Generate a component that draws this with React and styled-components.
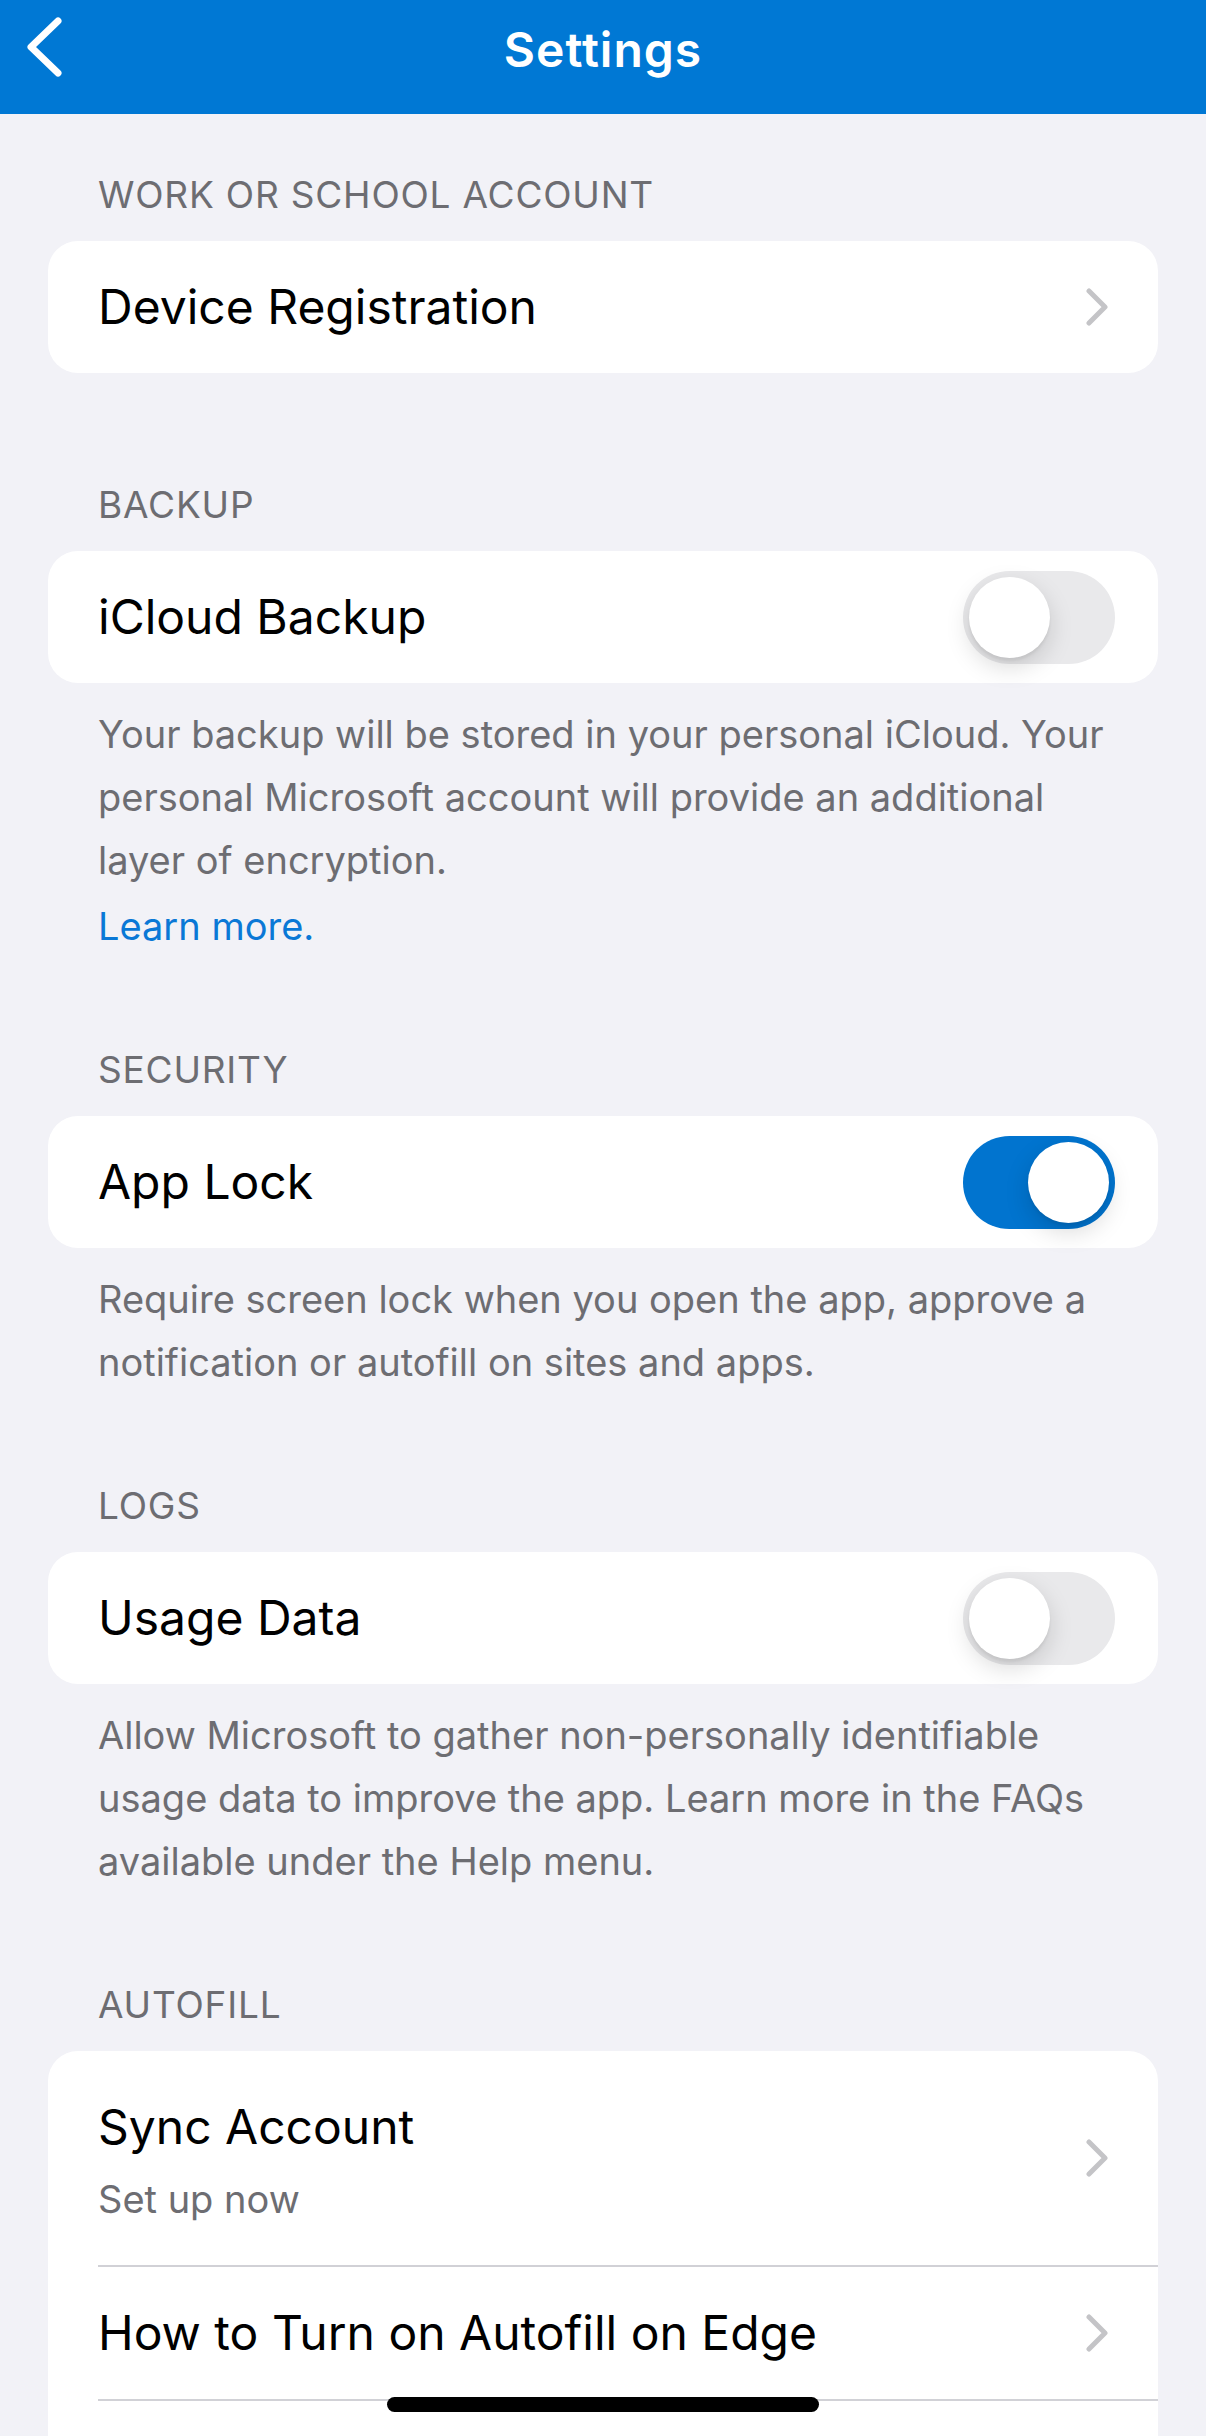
import React from 'react'
import styled, { createGlobalStyle } from 'styled-components'

const GlobalStyle = createGlobalStyle`
  html, body {
    margin: 0;
    padding: 0;
    background: #f2f2f7;
  }
  body {
    font-family: Inter, "Noto Sans", "Liberation Sans", sans-serif;
    -webkit-font-smoothing: antialiased;
  }
`

const Screen = styled.div`
  position: relative;
  width: 1206px;
  height: 2436px;
  overflow: hidden;
  background: #f2f2f7;
`
const NavBar = styled.header`
  display: grid;
  grid-template-columns: 1fr auto 1fr;
  align-items: center;
  height: 98px;
  padding-bottom: 16px;
  background: #0078d4;
`
const BackButton = styled.button`
  justify-self: start;
  display: flex;
  align-items: center;
  padding: 0 0 0 22px;
  border: 0;
  background: none;
  cursor: pointer;
`
const Title = styled.h1`
  margin: 0;
  font-size: 48px;
  font-weight: 600;
  letter-spacing: 1px;
  color: #fff;
`
const Content = styled.main`
  display: flex;
  flex-direction: column;
  padding: 58px 48px 0;
`
const Section = styled.section`
  display: flex;
  flex-direction: column;
  margin-bottom: ${props => props.$last ? 0 : props.$footer ? '89px' : '109px'};
`
const SectionHeader = styled.h2`
  margin: 0 0 23px;
  padding-left: 50px;
  font-size: 37px;
  line-height: 46px;
  font-weight: 400;
  letter-spacing: 0.8px;
  text-transform: uppercase;
  color: #6d6d72;
`
const Card = styled.div`
  display: flex;
  flex-direction: column;
  background: #fff;
  border-radius: 30px;
  padding-bottom: ${props => props.$open ? '120px' : 0};
`
const Row = styled.div`
  display: flex;
  align-items: center;
  justify-content: space-between;
  min-height: ${props => props.$tall ? '214px' : '132px'};
  margin-left: 50px;
  padding-right: ${props => props.$toggle ? '43px' : '50px'};
  border-bottom: ${props => props.$divider ? '2px solid #d1d1d6' : 'none'};
`
const RowText = styled.div`
  display: flex;
  flex-direction: column;
  gap: 20px;
  padding-top: 4px;
`
const Label = styled.span`
  font-size: 48px;
  line-height: 58px;
  letter-spacing: 0;
  color: #000;
`
const Sub = styled.span`
  font-size: 38px;
  line-height: 46px;
  letter-spacing: 0;
  color: #6d6d72;
`
const Footer = styled.div`
  display: flex;
  flex-direction: column;
  gap: 3px;
  padding: 20px 40px 0 50px;
`
const FooterText = styled.p`
  margin: 0;
  font-size: 38px;
  line-height: 63px;
  letter-spacing: 0;
  color: #6d6d72;
`
const Link = styled.a`
  font-size: 38px;
  line-height: 63px;
  letter-spacing: 0;
  color: #0a78d6;
  text-decoration: none;
`
const Track = styled.div`
  position: relative;
  flex: none;
  width: 152px;
  height: 93px;
  border-radius: 47px;
  background: ${props => props.$on ? '#0174cf' : '#e9e9eb'};
`
const Knob = styled.div`
  position: absolute;
  top: 6px;
  left: ${props => props.$on ? '65px' : '6px'};
  width: 81px;
  height: 81px;
  border-radius: 50%;
  background: #fff;
  box-shadow: 0 9px 24px rgba(0, 0, 0, 0.15), 0 3px 3px rgba(0, 0, 0, 0.06);
`
const HomeIndicator = styled.div`
  position: absolute;
  left: 387px;
  bottom: 24px;
  width: 432px;
  height: 15px;
  border-radius: 8px;
  background: #000;
`

const Toggle = ({ on }) => (
  <Track $on={on}>
    <Knob $on={on} />
  </Track>
)

const Chevron = () => (
  <svg width="22" height="38" viewBox="0 0 22 38" fill="none">
    <path d="M3 3 L19 19 L3 35" stroke="#c4c4c7" strokeWidth="5" strokeLinecap="round" strokeLinejoin="round" />
  </svg>
)

const BackIcon = () => (
  <svg width="44" height="64" viewBox="0 0 44 64" fill="none">
    <path d="M36 4 L9 30 L36 56" stroke="#fff" strokeWidth="7" strokeLinecap="round" strokeLinejoin="round" />
  </svg>
)

export default function App () {
  return (
    <Screen>
      <GlobalStyle />
      <NavBar>
        <BackButton aria-label="Back"><BackIcon /></BackButton>
        <Title>Settings</Title>
        <span />
      </NavBar>

      <Content>
        <Section>
          <SectionHeader>Work or School Account</SectionHeader>
          <Card>
            <Row>
              <Label>Device Registration</Label>
              <Chevron />
            </Row>
          </Card>
        </Section>

        <Section $footer>
          <SectionHeader>Backup</SectionHeader>
          <Card>
            <Row $toggle>
              <Label>iCloud Backup</Label>
              <Toggle on={false} />
            </Row>
          </Card>
          <Footer>
            <FooterText>
              Your backup will be stored in your personal iCloud. Your personal Microsoft account will provide an additional layer of encryption.
            </FooterText>
            <Link href="#">Learn more.</Link>
          </Footer>
        </Section>

        <Section $footer>
          <SectionHeader>Security</SectionHeader>
          <Card>
            <Row $toggle>
              <Label>App Lock</Label>
              <Toggle on />
            </Row>
          </Card>
          <Footer>
            <FooterText>
              Require screen lock when you open the app, approve a notification or autofill on sites and apps.
            </FooterText>
          </Footer>
        </Section>

        <Section $footer>
          <SectionHeader>Logs</SectionHeader>
          <Card>
            <Row $toggle>
              <Label>Usage Data</Label>
              <Toggle on={false} />
            </Row>
          </Card>
          <Footer>
            <FooterText>
              Allow Microsoft to gather non-personally identifiable usage data to improve the app. Learn more in the FAQs available under the Help menu.
            </FooterText>
          </Footer>
        </Section>

        <Section $last>
          <SectionHeader>Autofill</SectionHeader>
          <Card $open>
            <Row $tall $divider>
              <RowText>
                <Label>Sync Account</Label>
                <Sub>Set up now</Sub>
              </RowText>
              <Chevron />
            </Row>
            <Row $divider>
              <Label>How to Turn on Autofill on Edge</Label>
              <Chevron />
            </Row>
          </Card>
        </Section>
      </Content>

      <HomeIndicator />
    </Screen>
  )
}
